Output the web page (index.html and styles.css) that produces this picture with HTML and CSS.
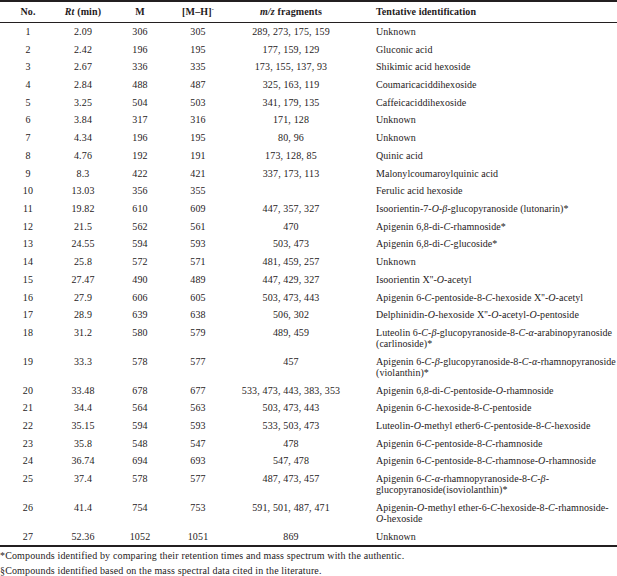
FILE: index.html
```html
<!DOCTYPE html>
<html>
<head>
<meta charset="utf-8">
<link rel="stylesheet" href="styles.css">
</head>
<body>
<table class="tbl">
  <thead>
    <tr>
      <th class="c-no">No.</th>
      <th class="c-rt"><i>Rt</i> (min)</th>
      <th class="c-m">M</th>
      <th class="c-mh">[M–H]<sup>-</sup></th>
      <th class="c-mz"><i>m/z</i> fragments</th>
      <th class="c-id">Tentative identification</th>
    </tr>
  </thead>
  <tbody>
    <tr><td>1</td><td>2.09</td><td>306</td><td>305</td><td>289, 273, 175, 159</td><td class="c-id">Unknown</td></tr>
    <tr><td>2</td><td>2.42</td><td>196</td><td>195</td><td>177, 159, 129</td><td class="c-id">Gluconic acid</td></tr>
    <tr><td>3</td><td>2.67</td><td>336</td><td>335</td><td>173, 155, 137, 93</td><td class="c-id">Shikimic acid hexoside</td></tr>
    <tr><td>4</td><td>2.84</td><td>488</td><td>487</td><td>325, 163, 119</td><td class="c-id">Coumaricaciddihexoside</td></tr>
    <tr><td>5</td><td>3.25</td><td>504</td><td>503</td><td>341, 179, 135</td><td class="c-id">Caffeicaciddihexoside</td></tr>
    <tr><td>6</td><td>3.84</td><td>317</td><td>316</td><td>171, 128</td><td class="c-id">Unknown</td></tr>
    <tr><td>7</td><td>4.34</td><td>196</td><td>195</td><td>80, 96</td><td class="c-id">Unknown</td></tr>
    <tr><td>8</td><td>4.76</td><td>192</td><td>191</td><td>173, 128, 85</td><td class="c-id">Quinic acid</td></tr>
    <tr><td>9</td><td>8.3</td><td>422</td><td>421</td><td>337, 173, 113</td><td class="c-id">Malonylcoumaroylquinic acid</td></tr>
    <tr><td>10</td><td>13.03</td><td>356</td><td>355</td><td></td><td class="c-id">Ferulic acid hexoside</td></tr>
    <tr><td>11</td><td>19.82</td><td>610</td><td>609</td><td>447, 357, 327</td><td class="c-id">Isoorientin-7-<i>O</i>-<i>β</i>-glucopyranoside (lutonarin)*</td></tr>
    <tr><td>12</td><td>21.5</td><td>562</td><td>561</td><td>470</td><td class="c-id">Apigenin 6,8-di-<i>C</i>-rhamnoside*</td></tr>
    <tr><td>13</td><td>24.55</td><td>594</td><td>593</td><td>503, 473</td><td class="c-id">Apigenin 6,8-di-<i>C</i>-glucoside*</td></tr>
    <tr><td>14</td><td>25.8</td><td>572</td><td>571</td><td>481, 459, 257</td><td class="c-id">Unknown</td></tr>
    <tr><td>15</td><td>27.47</td><td>490</td><td>489</td><td>447, 429, 327</td><td class="c-id">Isoorientin X''-<i>O</i>-acetyl</td></tr>
    <tr><td>16</td><td>27.9</td><td>606</td><td>605</td><td>503, 473, 443</td><td class="c-id">Apigenin 6-<i>C</i>-pentoside-8-<i>C</i>-hexoside X''-<i>O</i>-acetyl</td></tr>
    <tr><td>17</td><td>28.9</td><td>639</td><td>638</td><td>506, 302</td><td class="c-id">Delphinidin-<i>O</i>-hexoside X''-<i>O</i>-acetyl-<i>O</i>-pentoside</td></tr>
    <tr><td>18</td><td>31.2</td><td>580</td><td>579</td><td>489, 459</td><td class="c-id">Luteolin 6-<i>C</i>-<i>β</i>-glucopyranoside-8-<i>C</i>-<i>α</i>-arabinopyranoside<br>(carlinoside)*</td></tr>
    <tr><td>19</td><td>33.3</td><td>578</td><td>577</td><td>457</td><td class="c-id">Apigenin 6-<i>C</i>-<i>β</i>-glucopyranoside-8-<i>C</i>-<i>α</i>-rhamnopyranoside<br>(violanthin)*</td></tr>
    <tr><td>20</td><td>33.48</td><td>678</td><td>677</td><td>533, 473, 443, 383, 353</td><td class="c-id">Apigenin 6,8-di-<i>C</i>-pentoside-<i>O</i>-rhamnoside</td></tr>
    <tr><td>21</td><td>34.4</td><td>564</td><td>563</td><td>503, 473, 443</td><td class="c-id">Apigenin 6-<i>C</i>-hexoside-8-<i>C</i>-pentoside</td></tr>
    <tr><td>22</td><td>35.15</td><td>594</td><td>593</td><td>533, 503, 473</td><td class="c-id">Luteolin-<i>O</i>-methyl ether6-<i>C</i>-pentoside-8-<i>C</i>-hexoside</td></tr>
    <tr><td>23</td><td>35.8</td><td>548</td><td>547</td><td>478</td><td class="c-id">Apigenin 6-<i>C</i>-pentoside-8-<i>C</i>-rhamnoside</td></tr>
    <tr><td>24</td><td>36.74</td><td>694</td><td>693</td><td>547, 478</td><td class="c-id">Apigenin 6-<i>C</i>-pentoside-8-<i>C</i>-rhamnose-<i>O</i>-rhamnoside</td></tr>
    <tr><td>25</td><td>37.4</td><td>578</td><td>577</td><td>487, 473, 457</td><td class="c-id">Apigenin 6-<i>C</i>-<i>α</i>-rhamnopyranoside-8-<i>C</i>-<i>β</i>-<br>glucopyranoside(isoviolanthin)*</td></tr>
    <tr><td>26</td><td>41.4</td><td>754</td><td>753</td><td>591, 501, 487, 471</td><td class="c-id">Apigenin-<i>O</i>-methyl ether-6-<i>C</i>-hexoside-8-<i>C</i>-rhamnoside-<br><i>O</i>-hexoside</td></tr>
    <tr><td>27</td><td>52.36</td><td>1052</td><td>1051</td><td>869</td><td class="c-id">Unknown</td></tr>
  </tbody>
</table>
<div class="notes">
  <p class="note">*Compounds identified by comparing their retention times and mass spectrum with the authentic.</p>
  <p class="note">§Compounds identified based on the mass spectral data cited in the literature.</p>
</div>
</body>
</html>
```
FILE: styles.css
```css
html, body {
  margin: 0;
  padding: 0;
  background: #ffffff;
}
body {
  font-family: "Liberation Serif", "Times New Roman", serif;
  font-size: 10px;
  letter-spacing: 0.15px;
  color: #1f1b1c;
  width: 617px;
}
.tbl {
  width: 617px;
  border-collapse: collapse;
  border-top: 2px solid #231f20;
  border-bottom: 2px solid #231f20;
  table-layout: fixed;
}
.tbl th,
.tbl td {
  padding: 3.37px 0;
  line-height: 11px;
  text-align: center;
  vertical-align: top;
  font-weight: normal;
  white-space: nowrap;
}
.tbl thead th {
  font-weight: bold;
  border-bottom: 1px solid #231f20;
  padding-top: 4px;
  padding-bottom: 4px;
  line-height: 11.5px;
}
.tbl sup {
  font-size: 6px;
  vertical-align: top;
  line-height: 6px;
}
.c-no { width: 56px; }
.c-rt { width: 54px; }
.c-m { width: 60px; }
.c-mh { width: 56px; }
.c-mz { width: 130px; }
.tbl .c-id {
  text-align: left;
  padding-left: 20px;
  letter-spacing: 0.05px;
}
.notes {
  padding-top: 1px;
}
.note {
  margin: 0;
  line-height: 15px;
}
```
